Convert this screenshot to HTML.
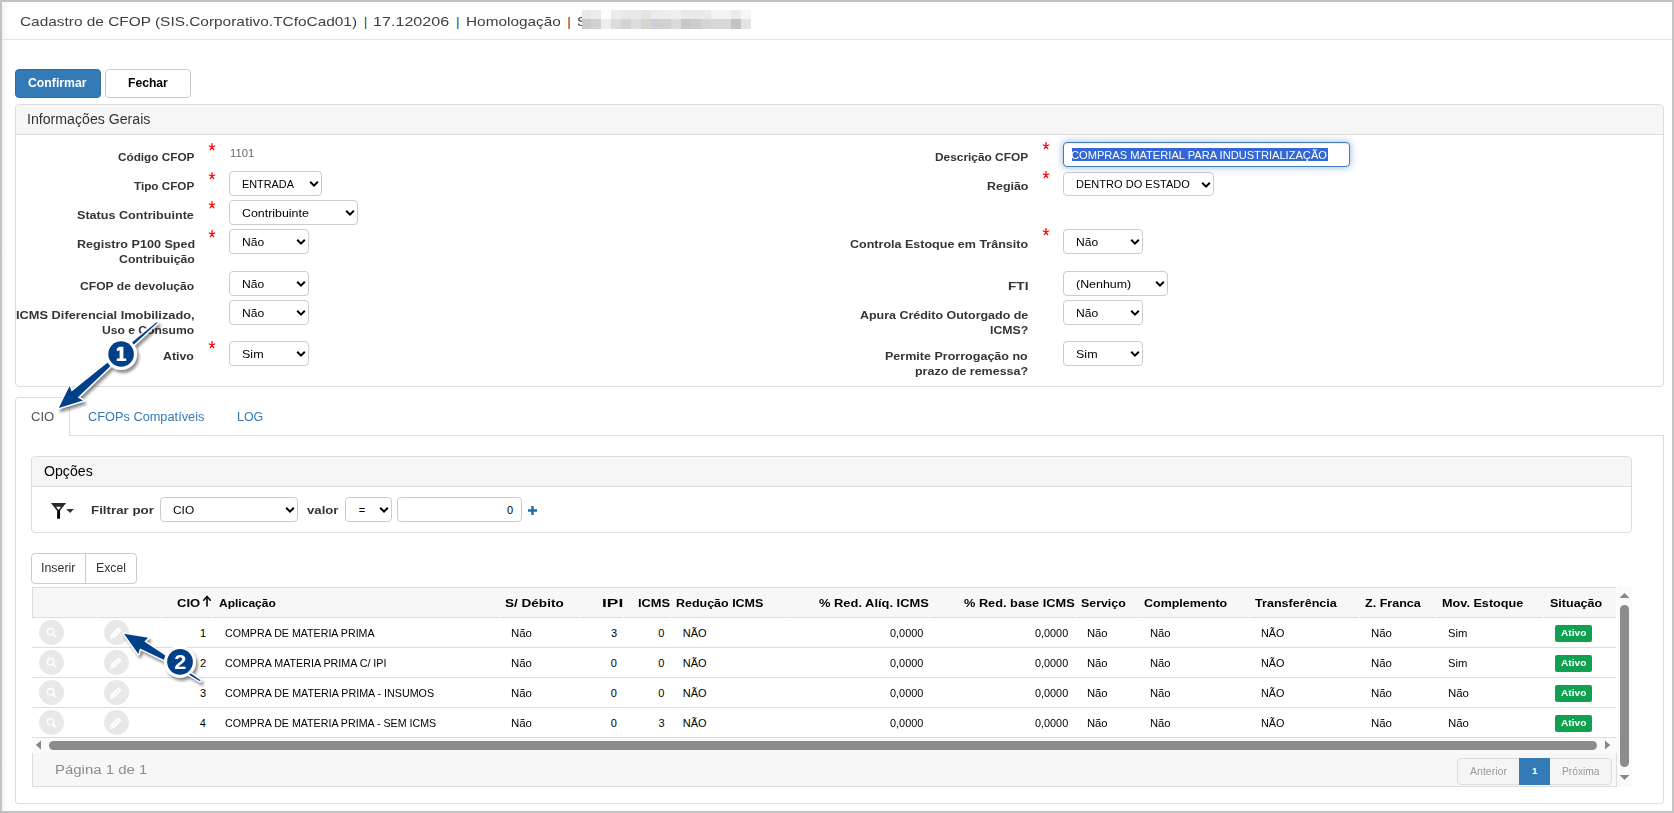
<!DOCTYPE html>
<html><head><meta charset="utf-8"><style>
html,body{margin:0;padding:0;width:1674px;height:813px;overflow:hidden;background:#fff;font-family:'Liberation Sans',sans-serif;}
#root{position:relative;width:1674px;height:813px;overflow:hidden;}
</style></head><body><div id="root">
<!-- outer frame -->
<div style="position:absolute;left:0;top:0;width:1674px;height:813px;box-sizing:border-box;border:2px solid #c2c2c2;"></div>
<div style="position:absolute;left:2px;top:2px;width:8px;height:809px;background:linear-gradient(to right,#f4f4f4,#fff);"></div>
<!-- header line -->
<div style="position:absolute;left:2px;top:39px;width:1670px;height:1px;background:#e2e2e2;"></div>
<!-- buttons -->
<div style="position:absolute;left:15px;top:69px;width:86px;height:29px;box-sizing:border-box;background:#337ab7;border:1px solid #2e6da4;border-radius:4px;"></div>
<div style="position:absolute;left:105px;top:69px;width:86px;height:29px;box-sizing:border-box;background:#fff;border:1px solid #ccc;border-radius:4px;"></div>
<!-- panel informacoes gerais -->
<div style="position:absolute;left:15px;top:104px;width:1649px;height:283px;box-sizing:border-box;border:1px solid #ddd;border-radius:4px;overflow:hidden;">
  <div style="position:absolute;left:0;top:0;right:0;height:29px;background:#f6f6f6;border-bottom:1px solid #ddd;"></div>
</div>
<!-- tabs container -->
<div style="position:absolute;left:15px;top:435px;width:1649px;height:369px;box-sizing:border-box;border:1px solid #ddd;border-top:none;border-radius:0 0 4px 4px;"></div>
<div style="position:absolute;left:69px;top:435px;width:1595px;height:1px;background:#ddd;"></div>
<div style="position:absolute;left:15px;top:397px;width:55px;height:39px;box-sizing:border-box;border:1px solid #ddd;border-bottom:none;border-radius:4px 4px 0 0;background:#fff;"></div>
<!-- opcoes panel -->
<div style="position:absolute;left:31px;top:456px;width:1601px;height:77px;box-sizing:border-box;border:1px solid #ddd;border-radius:4px;overflow:hidden;">
  <div style="position:absolute;left:0;top:0;right:0;height:29px;background:#f6f6f6;border-bottom:1px solid #ddd;"></div>
</div>
<!-- filter icon -->
<svg style="position:absolute;left:50px;top:502px" width="26" height="18" viewBox="0 0 26 18">
  <path d="M0.9 0.9 H16.1 L9.6 9.2 H7.4 Z M6.1 4.8 L11 4.8 L8.5 7.9 Z" fill="#2a2a2a" fill-rule="evenodd"/>
  <path d="M7.2 8.3 H10 L10.1 16.8 H7.4 L7.1 16.2 Z" fill="#000"/>
  <path d="M16.3 6.9 H23.9 L20.1 10.9 Z" fill="#333"/>
</svg>
<!-- plus -->
<svg style="position:absolute;left:527px;top:505px" width="11" height="11" viewBox="0 0 11 11"><path d="M5.5 1 V10 M1 5.5 H10" stroke="#1c6ea4" stroke-width="2.4"/></svg>
<!-- inserir excel group -->
<div style="position:absolute;left:31px;top:553px;width:106px;height:31px;box-sizing:border-box;border:1px solid #ccc;border-radius:4px;background:#fff;"></div>
<div style="position:absolute;left:85px;top:553px;width:1px;height:31px;background:#ccc;"></div>
<!-- table -->
<div style="position:absolute;left:32px;top:587px;width:1584px;height:31px;box-sizing:border-box;background:#f7f7f7;border-top:1px solid #ddd;border-bottom:1px solid #ddd;border-left:1px solid #ddd;"></div>
<div style="position:absolute;left:32px;top:647px;width:1584px;height:1px;background:#ddd;"></div>
<div style="position:absolute;left:32px;top:677px;width:1584px;height:1px;background:#ddd;"></div>
<div style="position:absolute;left:32px;top:707px;width:1584px;height:1px;background:#ddd;"></div>
<div style="position:absolute;left:32px;top:737px;width:1584px;height:1px;background:#ddd;"></div>
<!-- h scrollbar -->
<div style="position:absolute;left:32px;top:738px;width:1585px;height:15px;background:#fafafa;"></div>
<div style="position:absolute;left:49px;top:741px;width:1548px;height:9px;background:#8c8c8c;border-radius:5px;"></div>
<svg style="position:absolute;left:35px;top:740px" width="7" height="10"><path d="M6 0.5 V9.5 L0.8 5 Z" fill="#888"/></svg>
<svg style="position:absolute;left:1604px;top:740px" width="7" height="10"><path d="M1 0.5 V9.5 L6.2 5 Z" fill="#888"/></svg>
<!-- footer -->
<div style="position:absolute;left:32px;top:753px;width:1585px;height:34px;box-sizing:border-box;background:#f7f7f7;border-left:1px solid #ddd;border-bottom:1px solid #ddd;border-right:1px solid #ddd;"></div>
<div style="position:absolute;left:1457px;top:758px;width:155px;height:27px;box-sizing:border-box;border:1px solid #ddd;border-radius:4px;background:#f5f5f5;"></div>
<div style="position:absolute;left:1519px;top:758px;width:31px;height:27px;background:#337ab7;"></div>
<!-- v scrollbar -->
<div style="position:absolute;left:1617px;top:587px;width:15px;height:200px;background:#fafafa;"></div>
<svg style="position:absolute;left:1619px;top:592px" width="11" height="7"><path d="M0.5 6 H10.5 L5.5 1 Z" fill="#888"/></svg>
<div style="position:absolute;left:1620px;top:605px;width:9px;height:162px;background:#8c8c8c;border-radius:5px;"></div>
<svg style="position:absolute;left:1619px;top:774px" width="11" height="7"><path d="M0.5 1 H10.5 L5.5 6 Z" fill="#888"/></svg>
<svg style="position:absolute;left:202px;top:595px" width="10" height="13" viewBox="0 0 10 13"><path d="M5 1.6 V11" stroke="#000" stroke-width="1.6" stroke-linecap="round"/><path d="M1.7 5.3 L5 1.6 L8.3 5.3" fill="none" stroke="#000" stroke-width="1.5" stroke-linecap="round" stroke-linejoin="round"/></svg>
<div style="position:absolute;left:97px;top:617px;width:1px;height:1px;background:#fff;"></div><div style="position:absolute;left:161px;top:617px;width:1px;height:1px;background:#fff;"></div><div style="position:absolute;left:212px;top:617px;width:1px;height:1px;background:#fff;"></div><div style="position:absolute;left:499px;top:617px;width:1px;height:1px;background:#fff;"></div><div style="position:absolute;left:579px;top:617px;width:1px;height:1px;background:#fff;"></div><div style="position:absolute;left:623px;top:617px;width:1px;height:1px;background:#fff;"></div><div style="position:absolute;left:670px;top:617px;width:1px;height:1px;background:#fff;"></div><div style="position:absolute;left:786px;top:617px;width:1px;height:1px;background:#fff;"></div><div style="position:absolute;left:929px;top:617px;width:1px;height:1px;background:#fff;"></div><div style="position:absolute;left:1075px;top:617px;width:1px;height:1px;background:#fff;"></div><div style="position:absolute;left:1138px;top:617px;width:1px;height:1px;background:#fff;"></div><div style="position:absolute;left:1249px;top:617px;width:1px;height:1px;background:#fff;"></div><div style="position:absolute;left:1359px;top:617px;width:1px;height:1px;background:#fff;"></div><div style="position:absolute;left:1436px;top:617px;width:1px;height:1px;background:#fff;"></div><div style="position:absolute;left:1543px;top:617px;width:1px;height:1px;background:#fff;"></div>

<svg style="position:absolute;left:208.3px;top:143.4px" width="8" height="8" viewBox="-4 -4 8 8"><path d="M0 0 V-3.4 M0 0 L-2.7 -1 M0 0 L2.7 -1 M0 0 L-1.7 2.8 M0 0 L1.7 2.8" stroke="#f00" stroke-width="1.25" stroke-linecap="round"/></svg><svg style="position:absolute;left:208.3px;top:172.4px" width="8" height="8" viewBox="-4 -4 8 8"><path d="M0 0 V-3.4 M0 0 L-2.7 -1 M0 0 L2.7 -1 M0 0 L-1.7 2.8 M0 0 L1.7 2.8" stroke="#f00" stroke-width="1.25" stroke-linecap="round"/></svg><svg style="position:absolute;left:208.3px;top:201.4px" width="8" height="8" viewBox="-4 -4 8 8"><path d="M0 0 V-3.4 M0 0 L-2.7 -1 M0 0 L2.7 -1 M0 0 L-1.7 2.8 M0 0 L1.7 2.8" stroke="#f00" stroke-width="1.25" stroke-linecap="round"/></svg><svg style="position:absolute;left:208.3px;top:230.4px" width="8" height="8" viewBox="-4 -4 8 8"><path d="M0 0 V-3.4 M0 0 L-2.7 -1 M0 0 L2.7 -1 M0 0 L-1.7 2.8 M0 0 L1.7 2.8" stroke="#f00" stroke-width="1.25" stroke-linecap="round"/></svg><svg style="position:absolute;left:208.3px;top:341.4px" width="8" height="8" viewBox="-4 -4 8 8"><path d="M0 0 V-3.4 M0 0 L-2.7 -1 M0 0 L2.7 -1 M0 0 L-1.7 2.8 M0 0 L1.7 2.8" stroke="#f00" stroke-width="1.25" stroke-linecap="round"/></svg><svg style="position:absolute;left:1042.3px;top:142.4px" width="8" height="8" viewBox="-4 -4 8 8"><path d="M0 0 V-3.4 M0 0 L-2.7 -1 M0 0 L2.7 -1 M0 0 L-1.7 2.8 M0 0 L1.7 2.8" stroke="#f00" stroke-width="1.25" stroke-linecap="round"/></svg><svg style="position:absolute;left:1042.3px;top:171.4px" width="8" height="8" viewBox="-4 -4 8 8"><path d="M0 0 V-3.4 M0 0 L-2.7 -1 M0 0 L2.7 -1 M0 0 L-1.7 2.8 M0 0 L1.7 2.8" stroke="#f00" stroke-width="1.25" stroke-linecap="round"/></svg><svg style="position:absolute;left:1042.3px;top:228.4px" width="8" height="8" viewBox="-4 -4 8 8"><path d="M0 0 V-3.4 M0 0 L-2.7 -1 M0 0 L2.7 -1 M0 0 L-1.7 2.8 M0 0 L1.7 2.8" stroke="#f00" stroke-width="1.25" stroke-linecap="round"/></svg><div style="position:absolute;left:229px;top:171px;width:93px;height:25px;box-sizing:border-box;border:1px solid #ccc;border-radius:4px;background:#fff"></div><svg style="position:absolute;left:308.5px;top:179.6px" width="10" height="8" viewBox="0 0 10 8"><path d="M1.2 1.8 L5 5.6 L8.8 1.8" fill="none" stroke="#000" stroke-width="2"/></svg><div style="position:absolute;left:229px;top:200px;width:129px;height:25px;box-sizing:border-box;border:1px solid #ccc;border-radius:4px;background:#fff"></div><svg style="position:absolute;left:344.5px;top:208.6px" width="10" height="8" viewBox="0 0 10 8"><path d="M1.2 1.8 L5 5.6 L8.8 1.8" fill="none" stroke="#000" stroke-width="2"/></svg><div style="position:absolute;left:229px;top:229px;width:80px;height:25px;box-sizing:border-box;border:1px solid #ccc;border-radius:4px;background:#fff"></div><svg style="position:absolute;left:295.5px;top:237.6px" width="10" height="8" viewBox="0 0 10 8"><path d="M1.2 1.8 L5 5.6 L8.8 1.8" fill="none" stroke="#000" stroke-width="2"/></svg><div style="position:absolute;left:229px;top:271px;width:80px;height:25px;box-sizing:border-box;border:1px solid #ccc;border-radius:4px;background:#fff"></div><svg style="position:absolute;left:295.5px;top:279.6px" width="10" height="8" viewBox="0 0 10 8"><path d="M1.2 1.8 L5 5.6 L8.8 1.8" fill="none" stroke="#000" stroke-width="2"/></svg><div style="position:absolute;left:229px;top:300px;width:80px;height:25px;box-sizing:border-box;border:1px solid #ccc;border-radius:4px;background:#fff"></div><svg style="position:absolute;left:295.5px;top:308.6px" width="10" height="8" viewBox="0 0 10 8"><path d="M1.2 1.8 L5 5.6 L8.8 1.8" fill="none" stroke="#000" stroke-width="2"/></svg><div style="position:absolute;left:229px;top:341px;width:80px;height:25px;box-sizing:border-box;border:1px solid #ccc;border-radius:4px;background:#fff"></div><svg style="position:absolute;left:295.5px;top:349.6px" width="10" height="8" viewBox="0 0 10 8"><path d="M1.2 1.8 L5 5.6 L8.8 1.8" fill="none" stroke="#000" stroke-width="2"/></svg><div style="position:absolute;left:1063px;top:172px;width:151px;height:24px;box-sizing:border-box;border:1px solid #ccc;border-radius:4px;background:#fff"></div><svg style="position:absolute;left:1200.5px;top:180.6px" width="10" height="8" viewBox="0 0 10 8"><path d="M1.2 1.8 L5 5.6 L8.8 1.8" fill="none" stroke="#000" stroke-width="2"/></svg><div style="position:absolute;left:1063px;top:229px;width:80px;height:25px;box-sizing:border-box;border:1px solid #ccc;border-radius:4px;background:#fff"></div><svg style="position:absolute;left:1129.5px;top:237.6px" width="10" height="8" viewBox="0 0 10 8"><path d="M1.2 1.8 L5 5.6 L8.8 1.8" fill="none" stroke="#000" stroke-width="2"/></svg><div style="position:absolute;left:1063px;top:271px;width:105px;height:25px;box-sizing:border-box;border:1px solid #ccc;border-radius:4px;background:#fff"></div><svg style="position:absolute;left:1154.5px;top:279.6px" width="10" height="8" viewBox="0 0 10 8"><path d="M1.2 1.8 L5 5.6 L8.8 1.8" fill="none" stroke="#000" stroke-width="2"/></svg><div style="position:absolute;left:1063px;top:300px;width:80px;height:25px;box-sizing:border-box;border:1px solid #ccc;border-radius:4px;background:#fff"></div><svg style="position:absolute;left:1129.5px;top:308.6px" width="10" height="8" viewBox="0 0 10 8"><path d="M1.2 1.8 L5 5.6 L8.8 1.8" fill="none" stroke="#000" stroke-width="2"/></svg><div style="position:absolute;left:1063px;top:341px;width:80px;height:25px;box-sizing:border-box;border:1px solid #ccc;border-radius:4px;background:#fff"></div><svg style="position:absolute;left:1129.5px;top:349.6px" width="10" height="8" viewBox="0 0 10 8"><path d="M1.2 1.8 L5 5.6 L8.8 1.8" fill="none" stroke="#000" stroke-width="2"/></svg><div style="position:absolute;left:1063px;top:142px;width:287px;height:25px;box-sizing:border-box;border:1px solid #3f7cc0;border-radius:4px;background:#fff;box-shadow:inset 0 1px 1px rgba(0,0,0,.075),0 0 7px 1px rgba(70,120,180,.45)"></div><div style="position:absolute;left:1072px;top:148px;width:256px;height:13px;box-sizing:border-box;background:#3367d6"></div><div style="position:absolute;left:160px;top:497px;width:138px;height:25px;box-sizing:border-box;border:1px solid #ccc;border-radius:4px;background:#fff"></div><svg style="position:absolute;left:284.5px;top:505.6px" width="10" height="8" viewBox="0 0 10 8"><path d="M1.2 1.8 L5 5.6 L8.8 1.8" fill="none" stroke="#000" stroke-width="2"/></svg><div style="position:absolute;left:345px;top:497px;width:47px;height:25px;box-sizing:border-box;border:1px solid #ccc;border-radius:4px;background:#fff"></div><svg style="position:absolute;left:378.5px;top:505.6px" width="10" height="8" viewBox="0 0 10 8"><path d="M1.2 1.8 L5 5.6 L8.8 1.8" fill="none" stroke="#000" stroke-width="2"/></svg><div style="position:absolute;left:397px;top:497px;width:125px;height:25px;box-sizing:border-box;border:1px solid #ccc;border-radius:4px;background:#fff"></div><div style="position:absolute;left:1555px;top:625px;width:37px;height:17px;box-sizing:border-box;background:#0fa050;border-radius:2px"></div><div style="position:absolute;left:1555px;top:655px;width:37px;height:17px;box-sizing:border-box;background:#0fa050;border-radius:2px"></div><div style="position:absolute;left:1555px;top:685px;width:37px;height:17px;box-sizing:border-box;background:#0fa050;border-radius:2px"></div><div style="position:absolute;left:1555px;top:715px;width:37px;height:17px;box-sizing:border-box;background:#0fa050;border-radius:2px"></div><svg style="position:absolute;left:39px;top:620.0px" width="25" height="25" viewBox="0 0 25 25"><circle cx="12.5" cy="12.5" r="12.5" fill="#e8e8e8"/><circle cx="11.6" cy="11.7" r="3.2" fill="none" stroke="#fff" stroke-width="1.3"/><path d="M13.9 14.1 L16.6 16.9" stroke="#fff" stroke-width="1.6" stroke-linecap="round"/></svg><svg style="position:absolute;left:104px;top:620.0px" width="25" height="25" viewBox="0 0 25 25"><circle cx="12.5" cy="12.5" r="12.5" fill="#e8e8e8"/><path d="M7.8 17 L16 8.8" stroke="#fff" stroke-width="4.6"/><path d="M9.4 15.5 L15 9.9" stroke="#e8e8e8" stroke-width="0.8"/><path d="M6.5 18.4 L7.3 17.6" stroke="#fff" stroke-width="3"/></svg><svg style="position:absolute;left:39px;top:650.0px" width="25" height="25" viewBox="0 0 25 25"><circle cx="12.5" cy="12.5" r="12.5" fill="#e8e8e8"/><circle cx="11.6" cy="11.7" r="3.2" fill="none" stroke="#fff" stroke-width="1.3"/><path d="M13.9 14.1 L16.6 16.9" stroke="#fff" stroke-width="1.6" stroke-linecap="round"/></svg><svg style="position:absolute;left:104px;top:650.0px" width="25" height="25" viewBox="0 0 25 25"><circle cx="12.5" cy="12.5" r="12.5" fill="#e8e8e8"/><path d="M7.8 17 L16 8.8" stroke="#fff" stroke-width="4.6"/><path d="M9.4 15.5 L15 9.9" stroke="#e8e8e8" stroke-width="0.8"/><path d="M6.5 18.4 L7.3 17.6" stroke="#fff" stroke-width="3"/></svg><svg style="position:absolute;left:39px;top:680.0px" width="25" height="25" viewBox="0 0 25 25"><circle cx="12.5" cy="12.5" r="12.5" fill="#e8e8e8"/><circle cx="11.6" cy="11.7" r="3.2" fill="none" stroke="#fff" stroke-width="1.3"/><path d="M13.9 14.1 L16.6 16.9" stroke="#fff" stroke-width="1.6" stroke-linecap="round"/></svg><svg style="position:absolute;left:104px;top:680.0px" width="25" height="25" viewBox="0 0 25 25"><circle cx="12.5" cy="12.5" r="12.5" fill="#e8e8e8"/><path d="M7.8 17 L16 8.8" stroke="#fff" stroke-width="4.6"/><path d="M9.4 15.5 L15 9.9" stroke="#e8e8e8" stroke-width="0.8"/><path d="M6.5 18.4 L7.3 17.6" stroke="#fff" stroke-width="3"/></svg><svg style="position:absolute;left:39px;top:710.0px" width="25" height="25" viewBox="0 0 25 25"><circle cx="12.5" cy="12.5" r="12.5" fill="#e8e8e8"/><circle cx="11.6" cy="11.7" r="3.2" fill="none" stroke="#fff" stroke-width="1.3"/><path d="M13.9 14.1 L16.6 16.9" stroke="#fff" stroke-width="1.6" stroke-linecap="round"/></svg><svg style="position:absolute;left:104px;top:710.0px" width="25" height="25" viewBox="0 0 25 25"><circle cx="12.5" cy="12.5" r="12.5" fill="#e8e8e8"/><path d="M7.8 17 L16 8.8" stroke="#fff" stroke-width="4.6"/><path d="M9.4 15.5 L15 9.9" stroke="#e8e8e8" stroke-width="0.8"/><path d="M6.5 18.4 L7.3 17.6" stroke="#fff" stroke-width="3"/></svg>
<div class="tx" style="position:absolute;white-space:pre;top:15.24px;font-family:'Liberation Sans', sans-serif;font-size:13.6px;line-height:13.6px;font-weight:400;color:#404040;transform-origin:0 0;left:19.94px;transform:scaleX(1.1332);">Cadastro de CFOP (SIS.Corporativo.TCfoCad01)</div>
<div class="tx" style="position:absolute;white-space:pre;top:15.24px;font-family:'Liberation Sans', sans-serif;font-size:13.6px;line-height:13.6px;font-weight:400;color:#404040;transform-origin:0 0;left:363.71px;">|</div>
<div class="tx" style="position:absolute;white-space:pre;top:15.24px;font-family:'Liberation Sans', sans-serif;font-size:13.6px;line-height:13.6px;font-weight:400;color:#404040;transform-origin:0 0;left:373.03px;transform:scaleX(1.1866);">17.120206</div>
<div class="tx" style="position:absolute;white-space:pre;top:15.24px;font-family:'Liberation Sans', sans-serif;font-size:13.6px;line-height:13.6px;font-weight:400;color:#404040;transform-origin:0 0;left:456.11px;">|</div>
<div class="tx" style="position:absolute;white-space:pre;top:15.24px;font-family:'Liberation Sans', sans-serif;font-size:13.6px;line-height:13.6px;font-weight:400;color:#404040;transform-origin:0 0;left:465.85px;transform:scaleX(1.1300);">Homologação</div>
<div class="tx" style="position:absolute;white-space:pre;top:15.24px;font-family:'Liberation Sans', sans-serif;font-size:13.6px;line-height:13.6px;font-weight:400;color:#404040;transform-origin:0 0;left:567.31px;">|</div>
<div class="tx" style="position:absolute;white-space:pre;top:15.24px;font-family:'Liberation Sans', sans-serif;font-size:13.6px;line-height:13.6px;font-weight:400;color:#404040;transform-origin:0 0;left:577.08px;transform:scaleX(1.0762);">S</div>
<div class="tx" style="position:absolute;white-space:pre;top:76.80px;font-family:'Liberation Sans', sans-serif;font-size:12px;line-height:12px;font-weight:700;color:#fff;transform-origin:0 0;left:28.45px;transform:scaleX(1.0212);">Confirmar</div>
<div class="tx" style="position:absolute;white-space:pre;top:76.80px;font-family:'Liberation Sans', sans-serif;font-size:12px;line-height:12px;font-weight:700;color:#000;transform-origin:0 0;left:128.22px;transform:scaleX(1.0113);">Fechar</div>
<div class="tx" style="position:absolute;white-space:pre;top:112.10px;font-family:'Liberation Sans', sans-serif;font-size:14px;line-height:14px;font-weight:400;color:#333;transform-origin:0 0;left:27.02px;transform:scaleX(1.0102);">Informações Gerais</div>
<div class="tx" style="position:absolute;white-space:pre;top:151.97px;font-family:'Liberation Sans', sans-serif;font-size:11.8px;line-height:11.8px;font-weight:700;color:#353535;transform-origin:0 0;left:117.97px;transform:scaleX(0.9965);">Código CFOP</div>
<div class="tx" style="position:absolute;white-space:pre;top:180.97px;font-family:'Liberation Sans', sans-serif;font-size:11.8px;line-height:11.8px;font-weight:700;color:#353535;transform-origin:0 0;left:134.18px;transform:scaleX(0.9921);">Tipo CFOP</div>
<div class="tx" style="position:absolute;white-space:pre;top:209.97px;font-family:'Liberation Sans', sans-serif;font-size:11.8px;line-height:11.8px;font-weight:700;color:#353535;transform-origin:0 0;left:77.38px;transform:scaleX(1.0676);">Status Contribuinte</div>
<div class="tx" style="position:absolute;white-space:pre;top:238.97px;font-family:'Liberation Sans', sans-serif;font-size:11.8px;line-height:11.8px;font-weight:700;color:#353535;transform-origin:0 0;left:76.58px;transform:scaleX(1.0663);">Registro P100 Sped</div>
<div class="tx" style="position:absolute;white-space:pre;top:253.97px;font-family:'Liberation Sans', sans-serif;font-size:11.8px;line-height:11.8px;font-weight:700;color:#353535;transform-origin:0 0;left:118.65px;transform:scaleX(1.0423);">Contribuição</div>
<div class="tx" style="position:absolute;white-space:pre;top:280.97px;font-family:'Liberation Sans', sans-serif;font-size:11.8px;line-height:11.8px;font-weight:700;color:#353535;transform-origin:0 0;left:80.36px;transform:scaleX(1.0264);">CFOP de devolução</div>
<div class="tx" style="position:absolute;white-space:pre;top:309.97px;font-family:'Liberation Sans', sans-serif;font-size:11.8px;line-height:11.8px;font-weight:700;color:#353535;transform-origin:0 0;left:16.17px;transform:scaleX(1.0858);">ICMS Diferencial Imobilizado,</div>
<div class="tx" style="position:absolute;white-space:pre;top:324.97px;font-family:'Liberation Sans', sans-serif;font-size:11.8px;line-height:11.8px;font-weight:700;color:#353535;transform-origin:0 0;left:102.47px;transform:scaleX(1.0251);">Uso e Consumo</div>
<div class="tx" style="position:absolute;white-space:pre;top:350.97px;font-family:'Liberation Sans', sans-serif;font-size:11.8px;line-height:11.8px;font-weight:700;color:#353535;transform-origin:0 0;left:163.47px;transform:scaleX(1.0475);">Ativo</div>
<div class="tx" style="position:absolute;white-space:pre;top:151.97px;font-family:'Liberation Sans', sans-serif;font-size:11.8px;line-height:11.8px;font-weight:700;color:#353535;transform-origin:0 0;left:935.23px;transform:scaleX(1.0069);">Descrição CFOP</div>
<div class="tx" style="position:absolute;white-space:pre;top:180.97px;font-family:'Liberation Sans', sans-serif;font-size:11.8px;line-height:11.8px;font-weight:700;color:#353535;transform-origin:0 0;left:987.19px;transform:scaleX(1.0538);">Região</div>
<div class="tx" style="position:absolute;white-space:pre;top:238.97px;font-family:'Liberation Sans', sans-serif;font-size:11.8px;line-height:11.8px;font-weight:700;color:#353535;transform-origin:0 0;left:850.44px;transform:scaleX(1.0614);">Controla Estoque em Trânsito</div>
<div class="tx" style="position:absolute;white-space:pre;top:280.97px;font-family:'Liberation Sans', sans-serif;font-size:11.8px;line-height:11.8px;font-weight:700;color:#353535;transform-origin:0 0;left:1008.11px;transform:scaleX(1.1594);">FTI</div>
<div class="tx" style="position:absolute;white-space:pre;top:309.97px;font-family:'Liberation Sans', sans-serif;font-size:11.8px;line-height:11.8px;font-weight:700;color:#353535;transform-origin:0 0;left:860.17px;transform:scaleX(1.0566);">Apura Crédito Outorgado de</div>
<div class="tx" style="position:absolute;white-space:pre;top:324.97px;font-family:'Liberation Sans', sans-serif;font-size:11.8px;line-height:11.8px;font-weight:700;color:#353535;transform-origin:0 0;left:990.30px;transform:scaleX(1.0427);">ICMS?</div>
<div class="tx" style="position:absolute;white-space:pre;top:350.97px;font-family:'Liberation Sans', sans-serif;font-size:11.8px;line-height:11.8px;font-weight:700;color:#353535;transform-origin:0 0;left:885.48px;transform:scaleX(1.0624);">Permite Prorrogação no</div>
<div class="tx" style="position:absolute;white-space:pre;top:365.97px;font-family:'Liberation Sans', sans-serif;font-size:11.8px;line-height:11.8px;font-weight:700;color:#353535;transform-origin:0 0;left:915.49px;transform:scaleX(1.0581);">prazo de remessa?</div>
<div class="tx" style="position:absolute;white-space:pre;top:147.65px;font-family:'Liberation Sans', sans-serif;font-size:11px;line-height:11px;font-weight:400;color:#6a6a6a;transform-origin:0 0;left:229.68px;transform:scaleX(1.0262);">1101</div>
<div class="tx" style="position:absolute;white-space:pre;top:178.65px;font-family:'Liberation Sans', sans-serif;font-size:11px;line-height:11px;font-weight:400;color:#000;transform-origin:0 0;left:241.68px;transform:scaleX(0.9881);">ENTRADA</div>
<div class="tx" style="position:absolute;white-space:pre;top:207.65px;font-family:'Liberation Sans', sans-serif;font-size:11px;line-height:11px;font-weight:400;color:#000;transform-origin:0 0;left:241.79px;transform:scaleX(1.1257);">Contribuinte</div>
<div class="tx" style="position:absolute;white-space:pre;top:236.65px;font-family:'Liberation Sans', sans-serif;font-size:11px;line-height:11px;font-weight:400;color:#000;transform-origin:0 0;left:241.59px;transform:scaleX(1.0967);">Não</div>
<div class="tx" style="position:absolute;white-space:pre;top:278.65px;font-family:'Liberation Sans', sans-serif;font-size:11px;line-height:11px;font-weight:400;color:#000;transform-origin:0 0;left:241.59px;transform:scaleX(1.0967);">Não</div>
<div class="tx" style="position:absolute;white-space:pre;top:307.65px;font-family:'Liberation Sans', sans-serif;font-size:11px;line-height:11px;font-weight:400;color:#000;transform-origin:0 0;left:241.59px;transform:scaleX(1.0967);">Não</div>
<div class="tx" style="position:absolute;white-space:pre;top:348.65px;font-family:'Liberation Sans', sans-serif;font-size:11px;line-height:11px;font-weight:400;color:#000;transform-origin:0 0;left:241.66px;transform:scaleX(1.1379);">Sim</div>
<div class="tx" style="position:absolute;white-space:pre;top:178.65px;font-family:'Liberation Sans', sans-serif;font-size:11px;line-height:11px;font-weight:400;color:#000;transform-origin:0 0;left:1075.67px;transform:scaleX(1.0033);">DENTRO DO ESTADO</div>
<div class="tx" style="position:absolute;white-space:pre;top:236.65px;font-family:'Liberation Sans', sans-serif;font-size:11px;line-height:11px;font-weight:400;color:#000;transform-origin:0 0;left:1075.59px;transform:scaleX(1.0967);">Não</div>
<div class="tx" style="position:absolute;white-space:pre;top:278.65px;font-family:'Liberation Sans', sans-serif;font-size:11px;line-height:11px;font-weight:400;color:#000;transform-origin:0 0;left:1075.67px;transform:scaleX(1.1284);">(Nenhum)</div>
<div class="tx" style="position:absolute;white-space:pre;top:307.65px;font-family:'Liberation Sans', sans-serif;font-size:11px;line-height:11px;font-weight:400;color:#000;transform-origin:0 0;left:1075.59px;transform:scaleX(1.0967);">Não</div>
<div class="tx" style="position:absolute;white-space:pre;top:348.65px;font-family:'Liberation Sans', sans-serif;font-size:11px;line-height:11px;font-weight:400;color:#000;transform-origin:0 0;left:1075.66px;transform:scaleX(1.1379);">Sim</div>
<div class="tx" style="position:absolute;white-space:pre;top:149.65px;font-family:'Liberation Sans', sans-serif;font-size:11px;line-height:11px;font-weight:400;color:#fff;transform-origin:0 0;left:1071.36px;transform:scaleX(1.0098);">COMPRAS MATERIAL PARA INDUSTRIALIZAÇÃO</div>
<div class="tx" style="position:absolute;white-space:pre;top:411.38px;font-family:'Liberation Sans', sans-serif;font-size:12.5px;line-height:12.5px;font-weight:400;color:#555;transform-origin:0 0;left:30.68px;transform:scaleX(1.0490);">CIO</div>
<div class="tx" style="position:absolute;white-space:pre;top:411.38px;font-family:'Liberation Sans', sans-serif;font-size:12.5px;line-height:12.5px;font-weight:400;color:#337ab7;transform-origin:0 0;left:88.00px;transform:scaleX(1.0217);">CFOPs Compatíveis</div>
<div class="tx" style="position:absolute;white-space:pre;top:411.38px;font-family:'Liberation Sans', sans-serif;font-size:12.5px;line-height:12.5px;font-weight:400;color:#337ab7;transform-origin:0 0;left:237.49px;transform:scaleX(0.9959);">LOG</div>
<div class="tx" style="position:absolute;white-space:pre;top:464.10px;font-family:'Liberation Sans', sans-serif;font-size:14px;line-height:14px;font-weight:400;color:#000;transform-origin:0 0;left:43.60px;transform:scaleX(1.0096);">Opções</div>
<div class="tx" style="position:absolute;white-space:pre;top:504.97px;font-family:'Liberation Sans', sans-serif;font-size:11.8px;line-height:11.8px;font-weight:700;color:#353535;transform-origin:0 0;left:90.63px;transform:scaleX(1.1297);">Filtrar por</div>
<div class="tx" style="position:absolute;white-space:pre;top:504.97px;font-family:'Liberation Sans', sans-serif;font-size:11.8px;line-height:11.8px;font-weight:700;color:#353535;transform-origin:0 0;left:306.65px;transform:scaleX(1.1171);">valor</div>
<div class="tx" style="position:absolute;white-space:pre;top:504.65px;font-family:'Liberation Sans', sans-serif;font-size:11px;line-height:11px;font-weight:400;color:#000;transform-origin:0 0;left:172.82px;transform:scaleX(1.0796);">CIO</div>
<div class="tx" style="position:absolute;white-space:pre;top:504.65px;font-family:'Liberation Sans', sans-serif;font-size:11px;line-height:11px;font-weight:400;color:#000;transform-origin:0 0;left:358.63px;">=</div>
<div class="tx" style="position:absolute;white-space:pre;top:504.65px;font-family:'Liberation Sans', sans-serif;font-size:11px;line-height:11px;font-weight:400;color:#000;transform-origin:0 0;left:506.96px;">0</div>
<div class="tx" style="position:absolute;white-space:pre;top:561.80px;font-family:'Liberation Sans', sans-serif;font-size:12px;line-height:12px;font-weight:400;color:#333;transform-origin:0 0;left:41.24px;transform:scaleX(1.0337);">Inserir</div>
<div class="tx" style="position:absolute;white-space:pre;top:561.80px;font-family:'Liberation Sans', sans-serif;font-size:12px;line-height:12px;font-weight:400;color:#333;transform-origin:0 0;left:95.80px;transform:scaleX(1.0199);">Excel</div>
<div class="tx" style="position:absolute;white-space:pre;top:598.39px;font-family:'Liberation Sans', sans-serif;font-size:11.3px;line-height:11.3px;font-weight:700;color:#000;transform-origin:0 0;left:177.09px;transform:scaleX(1.1531);">CIO</div>
<div class="tx" style="position:absolute;white-space:pre;top:598.39px;font-family:'Liberation Sans', sans-serif;font-size:11.3px;line-height:11.3px;font-weight:700;color:#000;transform-origin:0 0;left:218.87px;transform:scaleX(1.0643);">Aplicação</div>
<div class="tx" style="position:absolute;white-space:pre;top:598.39px;font-family:'Liberation Sans', sans-serif;font-size:11.3px;line-height:11.3px;font-weight:700;color:#000;transform-origin:0 0;left:504.52px;transform:scaleX(1.1987);">S/ Débito</div>
<div class="tx" style="position:absolute;white-space:pre;top:598.39px;font-family:'Liberation Sans', sans-serif;font-size:11.3px;line-height:11.3px;font-weight:700;color:#000;transform-origin:0 0;left:602.16px;transform:scaleX(1.5348);">IPI</div>
<div class="tx" style="position:absolute;white-space:pre;top:598.39px;font-family:'Liberation Sans', sans-serif;font-size:11.3px;line-height:11.3px;font-weight:700;color:#000;transform-origin:0 0;left:638.15px;transform:scaleX(1.1374);">ICMS</div>
<div class="tx" style="position:absolute;white-space:pre;top:598.39px;font-family:'Liberation Sans', sans-serif;font-size:11.3px;line-height:11.3px;font-weight:700;color:#000;transform-origin:0 0;left:676.48px;transform:scaleX(1.1042);">Redução ICMS</div>
<div class="tx" style="position:absolute;white-space:pre;top:598.39px;font-family:'Liberation Sans', sans-serif;font-size:11.3px;line-height:11.3px;font-weight:700;color:#000;transform-origin:0 0;left:819.37px;transform:scaleX(1.1410);">% Red. Alíq. ICMS</div>
<div class="tx" style="position:absolute;white-space:pre;top:598.39px;font-family:'Liberation Sans', sans-serif;font-size:11.3px;line-height:11.3px;font-weight:700;color:#000;transform-origin:0 0;left:963.77px;transform:scaleX(1.1301);">% Red. base ICMS</div>
<div class="tx" style="position:absolute;white-space:pre;top:598.39px;font-family:'Liberation Sans', sans-serif;font-size:11.3px;line-height:11.3px;font-weight:700;color:#000;transform-origin:0 0;left:1080.68px;transform:scaleX(1.0956);">Serviço</div>
<div class="tx" style="position:absolute;white-space:pre;top:598.39px;font-family:'Liberation Sans', sans-serif;font-size:11.3px;line-height:11.3px;font-weight:700;color:#000;transform-origin:0 0;left:1144.02px;transform:scaleX(1.1048);">Complemento</div>
<div class="tx" style="position:absolute;white-space:pre;top:598.39px;font-family:'Liberation Sans', sans-serif;font-size:11.3px;line-height:11.3px;font-weight:700;color:#000;transform-origin:0 0;left:1255.36px;transform:scaleX(1.1141);">Transferência</div>
<div class="tx" style="position:absolute;white-space:pre;top:598.39px;font-family:'Liberation Sans', sans-serif;font-size:11.3px;line-height:11.3px;font-weight:700;color:#000;transform-origin:0 0;left:1364.97px;transform:scaleX(1.1112);">Z. Franca</div>
<div class="tx" style="position:absolute;white-space:pre;top:598.39px;font-family:'Liberation Sans', sans-serif;font-size:11.3px;line-height:11.3px;font-weight:700;color:#000;transform-origin:0 0;left:1441.76px;transform:scaleX(1.1207);">Mov. Estoque</div>
<div class="tx" style="position:absolute;white-space:pre;top:598.39px;font-family:'Liberation Sans', sans-serif;font-size:11.3px;line-height:11.3px;font-weight:700;color:#000;transform-origin:0 0;left:1549.57px;transform:scaleX(1.1078);">Situação</div>
<div class="tx" style="position:absolute;white-space:pre;top:627.65px;font-family:'Liberation Sans', sans-serif;font-size:11px;line-height:11px;font-weight:400;color:#000;transform-origin:0 0;left:200.02px;">1</div>
<div class="tx" style="position:absolute;white-space:pre;top:627.65px;font-family:'Liberation Sans', sans-serif;font-size:11px;line-height:11px;font-weight:400;color:#000;transform-origin:0 0;left:225.39px;transform:scaleX(0.9686);">COMPRA DE MATERIA PRIMA</div>
<div class="tx" style="position:absolute;white-space:pre;top:627.65px;font-family:'Liberation Sans', sans-serif;font-size:11px;line-height:11px;font-weight:400;color:#000;transform-origin:0 0;left:510.64px;transform:scaleX(1.0381);">Não</div>
<div class="tx" style="position:absolute;white-space:pre;top:627.65px;font-family:'Liberation Sans', sans-serif;font-size:11px;line-height:11px;font-weight:400;color:#000;transform-origin:0 0;left:610.88px;">3</div>
<div class="tx" style="position:absolute;white-space:pre;top:627.65px;font-family:'Liberation Sans', sans-serif;font-size:11px;line-height:11px;font-weight:400;color:#000;transform-origin:0 0;left:658.36px;">0</div>
<div class="tx" style="position:absolute;white-space:pre;top:627.65px;font-family:'Liberation Sans', sans-serif;font-size:11px;line-height:11px;font-weight:400;color:#000;transform-origin:0 0;left:682.77px;">NÃO</div>
<div class="tx" style="position:absolute;white-space:pre;top:627.65px;font-family:'Liberation Sans', sans-serif;font-size:11px;line-height:11px;font-weight:400;color:#000;transform-origin:0 0;left:889.87px;transform:scaleX(0.9897);">0,0000</div>
<div class="tx" style="position:absolute;white-space:pre;top:627.65px;font-family:'Liberation Sans', sans-serif;font-size:11px;line-height:11px;font-weight:400;color:#000;transform-origin:0 0;left:1035.37px;transform:scaleX(0.9866);">0,0000</div>
<div class="tx" style="position:absolute;white-space:pre;top:627.65px;font-family:'Liberation Sans', sans-serif;font-size:11px;line-height:11px;font-weight:400;color:#000;transform-origin:0 0;left:1087.15px;transform:scaleX(1.0221);">Não</div>
<div class="tx" style="position:absolute;white-space:pre;top:627.65px;font-family:'Liberation Sans', sans-serif;font-size:11px;line-height:11px;font-weight:400;color:#000;transform-origin:0 0;left:1150.45px;transform:scaleX(1.0221);">Não</div>
<div class="tx" style="position:absolute;white-space:pre;top:627.65px;font-family:'Liberation Sans', sans-serif;font-size:11px;line-height:11px;font-weight:400;color:#000;transform-origin:0 0;left:1261.38px;transform:scaleX(0.9857);">NÃO</div>
<div class="tx" style="position:absolute;white-space:pre;top:627.65px;font-family:'Liberation Sans', sans-serif;font-size:11px;line-height:11px;font-weight:400;color:#000;transform-origin:0 0;left:1371.14px;transform:scaleX(1.0381);">Não</div>
<div class="tx" style="position:absolute;white-space:pre;top:627.65px;font-family:'Liberation Sans', sans-serif;font-size:11px;line-height:11px;font-weight:400;color:#000;transform-origin:0 0;left:1448.24px;transform:scaleX(1.0241);">Sim</div>
<div class="tx" style="position:absolute;white-space:pre;top:628.98px;font-family:'Liberation Sans', sans-serif;font-size:9.2px;line-height:9.2px;font-weight:700;color:#fff;transform-origin:0 0;left:1561.08px;transform:scaleX(1.1059);">Ativo</div>
<div class="tx" style="position:absolute;white-space:pre;top:657.65px;font-family:'Liberation Sans', sans-serif;font-size:11px;line-height:11px;font-weight:400;color:#000;transform-origin:0 0;left:200.03px;">2</div>
<div class="tx" style="position:absolute;white-space:pre;top:657.65px;font-family:'Liberation Sans', sans-serif;font-size:11px;line-height:11px;font-weight:400;color:#000;transform-origin:0 0;left:225.39px;transform:scaleX(0.9723);">COMPRA MATERIA PRIMA C/ IPI</div>
<div class="tx" style="position:absolute;white-space:pre;top:657.65px;font-family:'Liberation Sans', sans-serif;font-size:11px;line-height:11px;font-weight:400;color:#000;transform-origin:0 0;left:510.64px;transform:scaleX(1.0381);">Não</div>
<div class="tx" style="position:absolute;white-space:pre;top:657.65px;font-family:'Liberation Sans', sans-serif;font-size:11px;line-height:11px;font-weight:400;color:#000;transform-origin:0 0;left:610.86px;">0</div>
<div class="tx" style="position:absolute;white-space:pre;top:657.65px;font-family:'Liberation Sans', sans-serif;font-size:11px;line-height:11px;font-weight:400;color:#000;transform-origin:0 0;left:658.36px;">0</div>
<div class="tx" style="position:absolute;white-space:pre;top:657.65px;font-family:'Liberation Sans', sans-serif;font-size:11px;line-height:11px;font-weight:400;color:#000;transform-origin:0 0;left:682.77px;">NÃO</div>
<div class="tx" style="position:absolute;white-space:pre;top:657.65px;font-family:'Liberation Sans', sans-serif;font-size:11px;line-height:11px;font-weight:400;color:#000;transform-origin:0 0;left:889.87px;transform:scaleX(0.9897);">0,0000</div>
<div class="tx" style="position:absolute;white-space:pre;top:657.65px;font-family:'Liberation Sans', sans-serif;font-size:11px;line-height:11px;font-weight:400;color:#000;transform-origin:0 0;left:1035.37px;transform:scaleX(0.9866);">0,0000</div>
<div class="tx" style="position:absolute;white-space:pre;top:657.65px;font-family:'Liberation Sans', sans-serif;font-size:11px;line-height:11px;font-weight:400;color:#000;transform-origin:0 0;left:1087.15px;transform:scaleX(1.0221);">Não</div>
<div class="tx" style="position:absolute;white-space:pre;top:657.65px;font-family:'Liberation Sans', sans-serif;font-size:11px;line-height:11px;font-weight:400;color:#000;transform-origin:0 0;left:1150.45px;transform:scaleX(1.0221);">Não</div>
<div class="tx" style="position:absolute;white-space:pre;top:657.65px;font-family:'Liberation Sans', sans-serif;font-size:11px;line-height:11px;font-weight:400;color:#000;transform-origin:0 0;left:1261.38px;transform:scaleX(0.9857);">NÃO</div>
<div class="tx" style="position:absolute;white-space:pre;top:657.65px;font-family:'Liberation Sans', sans-serif;font-size:11px;line-height:11px;font-weight:400;color:#000;transform-origin:0 0;left:1371.14px;transform:scaleX(1.0381);">Não</div>
<div class="tx" style="position:absolute;white-space:pre;top:657.65px;font-family:'Liberation Sans', sans-serif;font-size:11px;line-height:11px;font-weight:400;color:#000;transform-origin:0 0;left:1448.24px;transform:scaleX(1.0241);">Sim</div>
<div class="tx" style="position:absolute;white-space:pre;top:658.98px;font-family:'Liberation Sans', sans-serif;font-size:9.2px;line-height:9.2px;font-weight:700;color:#fff;transform-origin:0 0;left:1561.08px;transform:scaleX(1.1059);">Ativo</div>
<div class="tx" style="position:absolute;white-space:pre;top:687.65px;font-family:'Liberation Sans', sans-serif;font-size:11px;line-height:11px;font-weight:400;color:#000;transform-origin:0 0;left:199.88px;">3</div>
<div class="tx" style="position:absolute;white-space:pre;top:687.65px;font-family:'Liberation Sans', sans-serif;font-size:11px;line-height:11px;font-weight:400;color:#000;transform-origin:0 0;left:225.39px;transform:scaleX(0.9726);">COMPRA DE MATERIA PRIMA - INSUMOS</div>
<div class="tx" style="position:absolute;white-space:pre;top:687.65px;font-family:'Liberation Sans', sans-serif;font-size:11px;line-height:11px;font-weight:400;color:#000;transform-origin:0 0;left:510.64px;transform:scaleX(1.0381);">Não</div>
<div class="tx" style="position:absolute;white-space:pre;top:687.65px;font-family:'Liberation Sans', sans-serif;font-size:11px;line-height:11px;font-weight:400;color:#000;transform-origin:0 0;left:610.86px;">0</div>
<div class="tx" style="position:absolute;white-space:pre;top:687.65px;font-family:'Liberation Sans', sans-serif;font-size:11px;line-height:11px;font-weight:400;color:#000;transform-origin:0 0;left:658.36px;">0</div>
<div class="tx" style="position:absolute;white-space:pre;top:687.65px;font-family:'Liberation Sans', sans-serif;font-size:11px;line-height:11px;font-weight:400;color:#000;transform-origin:0 0;left:682.77px;">NÃO</div>
<div class="tx" style="position:absolute;white-space:pre;top:687.65px;font-family:'Liberation Sans', sans-serif;font-size:11px;line-height:11px;font-weight:400;color:#000;transform-origin:0 0;left:889.87px;transform:scaleX(0.9897);">0,0000</div>
<div class="tx" style="position:absolute;white-space:pre;top:687.65px;font-family:'Liberation Sans', sans-serif;font-size:11px;line-height:11px;font-weight:400;color:#000;transform-origin:0 0;left:1035.37px;transform:scaleX(0.9866);">0,0000</div>
<div class="tx" style="position:absolute;white-space:pre;top:687.65px;font-family:'Liberation Sans', sans-serif;font-size:11px;line-height:11px;font-weight:400;color:#000;transform-origin:0 0;left:1087.15px;transform:scaleX(1.0221);">Não</div>
<div class="tx" style="position:absolute;white-space:pre;top:687.65px;font-family:'Liberation Sans', sans-serif;font-size:11px;line-height:11px;font-weight:400;color:#000;transform-origin:0 0;left:1150.45px;transform:scaleX(1.0221);">Não</div>
<div class="tx" style="position:absolute;white-space:pre;top:687.65px;font-family:'Liberation Sans', sans-serif;font-size:11px;line-height:11px;font-weight:400;color:#000;transform-origin:0 0;left:1261.38px;transform:scaleX(0.9857);">NÃO</div>
<div class="tx" style="position:absolute;white-space:pre;top:687.65px;font-family:'Liberation Sans', sans-serif;font-size:11px;line-height:11px;font-weight:400;color:#000;transform-origin:0 0;left:1371.14px;transform:scaleX(1.0381);">Não</div>
<div class="tx" style="position:absolute;white-space:pre;top:687.65px;font-family:'Liberation Sans', sans-serif;font-size:11px;line-height:11px;font-weight:400;color:#000;transform-origin:0 0;left:1448.14px;transform:scaleX(1.0381);">Não</div>
<div class="tx" style="position:absolute;white-space:pre;top:688.98px;font-family:'Liberation Sans', sans-serif;font-size:9.2px;line-height:9.2px;font-weight:700;color:#fff;transform-origin:0 0;left:1561.08px;transform:scaleX(1.1059);">Ativo</div>
<div class="tx" style="position:absolute;white-space:pre;top:717.65px;font-family:'Liberation Sans', sans-serif;font-size:11px;line-height:11px;font-weight:400;color:#000;transform-origin:0 0;left:199.69px;">4</div>
<div class="tx" style="position:absolute;white-space:pre;top:717.65px;font-family:'Liberation Sans', sans-serif;font-size:11px;line-height:11px;font-weight:400;color:#000;transform-origin:0 0;left:225.39px;transform:scaleX(0.9688);">COMPRA DE MATERIA PRIMA - SEM ICMS</div>
<div class="tx" style="position:absolute;white-space:pre;top:717.65px;font-family:'Liberation Sans', sans-serif;font-size:11px;line-height:11px;font-weight:400;color:#000;transform-origin:0 0;left:510.64px;transform:scaleX(1.0381);">Não</div>
<div class="tx" style="position:absolute;white-space:pre;top:717.65px;font-family:'Liberation Sans', sans-serif;font-size:11px;line-height:11px;font-weight:400;color:#000;transform-origin:0 0;left:610.86px;">0</div>
<div class="tx" style="position:absolute;white-space:pre;top:717.65px;font-family:'Liberation Sans', sans-serif;font-size:11px;line-height:11px;font-weight:400;color:#000;transform-origin:0 0;left:658.38px;">3</div>
<div class="tx" style="position:absolute;white-space:pre;top:717.65px;font-family:'Liberation Sans', sans-serif;font-size:11px;line-height:11px;font-weight:400;color:#000;transform-origin:0 0;left:682.77px;">NÃO</div>
<div class="tx" style="position:absolute;white-space:pre;top:717.65px;font-family:'Liberation Sans', sans-serif;font-size:11px;line-height:11px;font-weight:400;color:#000;transform-origin:0 0;left:889.87px;transform:scaleX(0.9897);">0,0000</div>
<div class="tx" style="position:absolute;white-space:pre;top:717.65px;font-family:'Liberation Sans', sans-serif;font-size:11px;line-height:11px;font-weight:400;color:#000;transform-origin:0 0;left:1035.37px;transform:scaleX(0.9866);">0,0000</div>
<div class="tx" style="position:absolute;white-space:pre;top:717.65px;font-family:'Liberation Sans', sans-serif;font-size:11px;line-height:11px;font-weight:400;color:#000;transform-origin:0 0;left:1087.15px;transform:scaleX(1.0221);">Não</div>
<div class="tx" style="position:absolute;white-space:pre;top:717.65px;font-family:'Liberation Sans', sans-serif;font-size:11px;line-height:11px;font-weight:400;color:#000;transform-origin:0 0;left:1150.45px;transform:scaleX(1.0221);">Não</div>
<div class="tx" style="position:absolute;white-space:pre;top:717.65px;font-family:'Liberation Sans', sans-serif;font-size:11px;line-height:11px;font-weight:400;color:#000;transform-origin:0 0;left:1261.38px;transform:scaleX(0.9857);">NÃO</div>
<div class="tx" style="position:absolute;white-space:pre;top:717.65px;font-family:'Liberation Sans', sans-serif;font-size:11px;line-height:11px;font-weight:400;color:#000;transform-origin:0 0;left:1371.14px;transform:scaleX(1.0381);">Não</div>
<div class="tx" style="position:absolute;white-space:pre;top:717.65px;font-family:'Liberation Sans', sans-serif;font-size:11px;line-height:11px;font-weight:400;color:#000;transform-origin:0 0;left:1448.14px;transform:scaleX(1.0381);">Não</div>
<div class="tx" style="position:absolute;white-space:pre;top:718.98px;font-family:'Liberation Sans', sans-serif;font-size:9.2px;line-height:9.2px;font-weight:700;color:#fff;transform-origin:0 0;left:1561.08px;transform:scaleX(1.1059);">Ativo</div>
<div class="tx" style="position:absolute;white-space:pre;top:764.38px;font-family:'Liberation Sans', sans-serif;font-size:12.5px;line-height:12.5px;font-weight:400;color:#8c8c8c;transform-origin:0 0;left:55.11px;transform:scaleX(1.1960);">Página 1 de 1</div>
<div class="tx" style="position:absolute;white-space:pre;top:766.08px;font-family:'Liberation Sans', sans-serif;font-size:10.5px;line-height:10.5px;font-weight:400;color:#999;transform-origin:0 0;left:1470.17px;transform:scaleX(1.0042);">Anterior</div>
<div class="tx" style="position:absolute;white-space:pre;top:765.92px;font-family:'Liberation Sans', sans-serif;font-size:9.5px;line-height:9.5px;font-weight:700;color:#fff;transform-origin:0 0;left:1532.02px;">1</div>
<div class="tx" style="position:absolute;white-space:pre;top:766.08px;font-family:'Liberation Sans', sans-serif;font-size:10.5px;line-height:10.5px;font-weight:400;color:#999;transform-origin:0 0;left:1561.51px;transform:scaleX(0.9747);">Próxima</div>
<!-- mosaic -->
<div style="position:absolute;left:582px;top:10px;width:169px;height:19px;display:grid;grid-template-columns:9px repeat(16,10px);grid-template-rows:9px 10px;">
<i style="background:#e8e8e8"></i><i style="background:#ebecec"></i><i style="background:#fdfeff"></i><i style="background:#ececec"></i><i style="background:#e8e8e8"></i><i style="background:#e9e9e9"></i><i style="background:#e6e4e2"></i><i style="background:#eaebed"></i><i style="background:#ececec"></i><i style="background:#efefed"></i><i style="background:#e8e9eb"></i><i style="background:#e9e9e9"></i><i style="background:#e9e9e9"></i><i style="background:#f3f3f3"></i><i style="background:#f3f3f2"></i><i style="background:#ebebeb"></i><i style="background:#f5f6f7"></i>
<i style="background:#cacaca"></i><i style="background:#d2d2d2"></i><i style="background:#ecedee"></i><i style="background:#dcdcdc"></i><i style="background:#d4d2d2"></i><i style="background:#dcdddc"></i><i style="background:#d7d3ce"></i><i style="background:#cdd0d4"></i><i style="background:#d2d2d2"></i><i style="background:#dadada"></i><i style="background:#c7c7c7"></i><i style="background:#cbcccd"></i><i style="background:#d7d5d3"></i><i style="background:#d7d7d7"></i><i style="background:#d8d8d8"></i><i style="background:#c3c3c3"></i><i style="background:#e3e4e3"></i>
</div>

<svg style="position:absolute;left:0;top:0;overflow:visible" width="1674" height="813" viewBox="0 0 1674 813">
<defs><filter id="sh" x="-50%" y="-50%" width="200%" height="200%"><feGaussianBlur in="SourceAlpha" stdDeviation="1.7"/><feOffset dx="2" dy="2.5"/><feComponentTransfer><feFuncA type="linear" slope="0.45"/></feComponentTransfer><feMerge><feMergeNode/><feMergeNode in="SourceGraphic"/></feMerge></filter></defs>
<g filter="url(#sh)">
<path d="M58.80 408.00 L69.60 386.00 L71.60 391.40 L106.10 363.70 L156.87 322.02 L157.53 322.78 L109.80 366.80 L77.70 397.50 L83.10 400.60 Z" fill="#fff" stroke="#fff" stroke-width="2.6" stroke-linejoin="round"/>
<path d="M58.80 408.00 L69.60 386.00 L71.60 391.40 L106.10 363.70 L156.87 322.02 L157.53 322.78 L109.80 366.80 L77.70 397.50 L83.10 400.60 Z" fill="#053f88"/>
<circle cx="121" cy="354" r="16" fill="#fff"/><circle cx="121.1" cy="354" r="12.8" fill="#053f88"/>
<path d="M119.1 346.7 H123.4 V358.6 H126.2 V361.1 H116.8 V358.6 H119.6 V350.2 L116.8 351.3 V348.7 Z" fill="#fff"/>
</g>
<g filter="url(#sh)">
<path d="M124.00 633.80 L148.20 637.70 L144.30 641.50 L165.00 655.30 L200.56 680.27 L200.04 681.13 L163.20 659.60 L140.00 648.40 L138.30 654.00 Z" fill="#fff" stroke="#fff" stroke-width="2.6" stroke-linejoin="round"/>
<path d="M124.00 633.80 L148.20 637.70 L144.30 641.50 L165.00 655.30 L200.56 680.27 L200.04 681.13 L163.20 659.60 L140.00 648.40 L138.30 654.00 Z" fill="#053f88"/>
<circle cx="180" cy="661.7" r="16" fill="#fff"/><circle cx="180" cy="661.8" r="12.9" fill="#053f88"/>
<text x="0" y="0" transform="translate(180.4,669.2) scale(1.1,1)" text-anchor="middle" font-family="Liberation Sans" font-weight="700" font-size="19.8" fill="#fff">2</text>
</g>
</svg>
</div></body></html>
